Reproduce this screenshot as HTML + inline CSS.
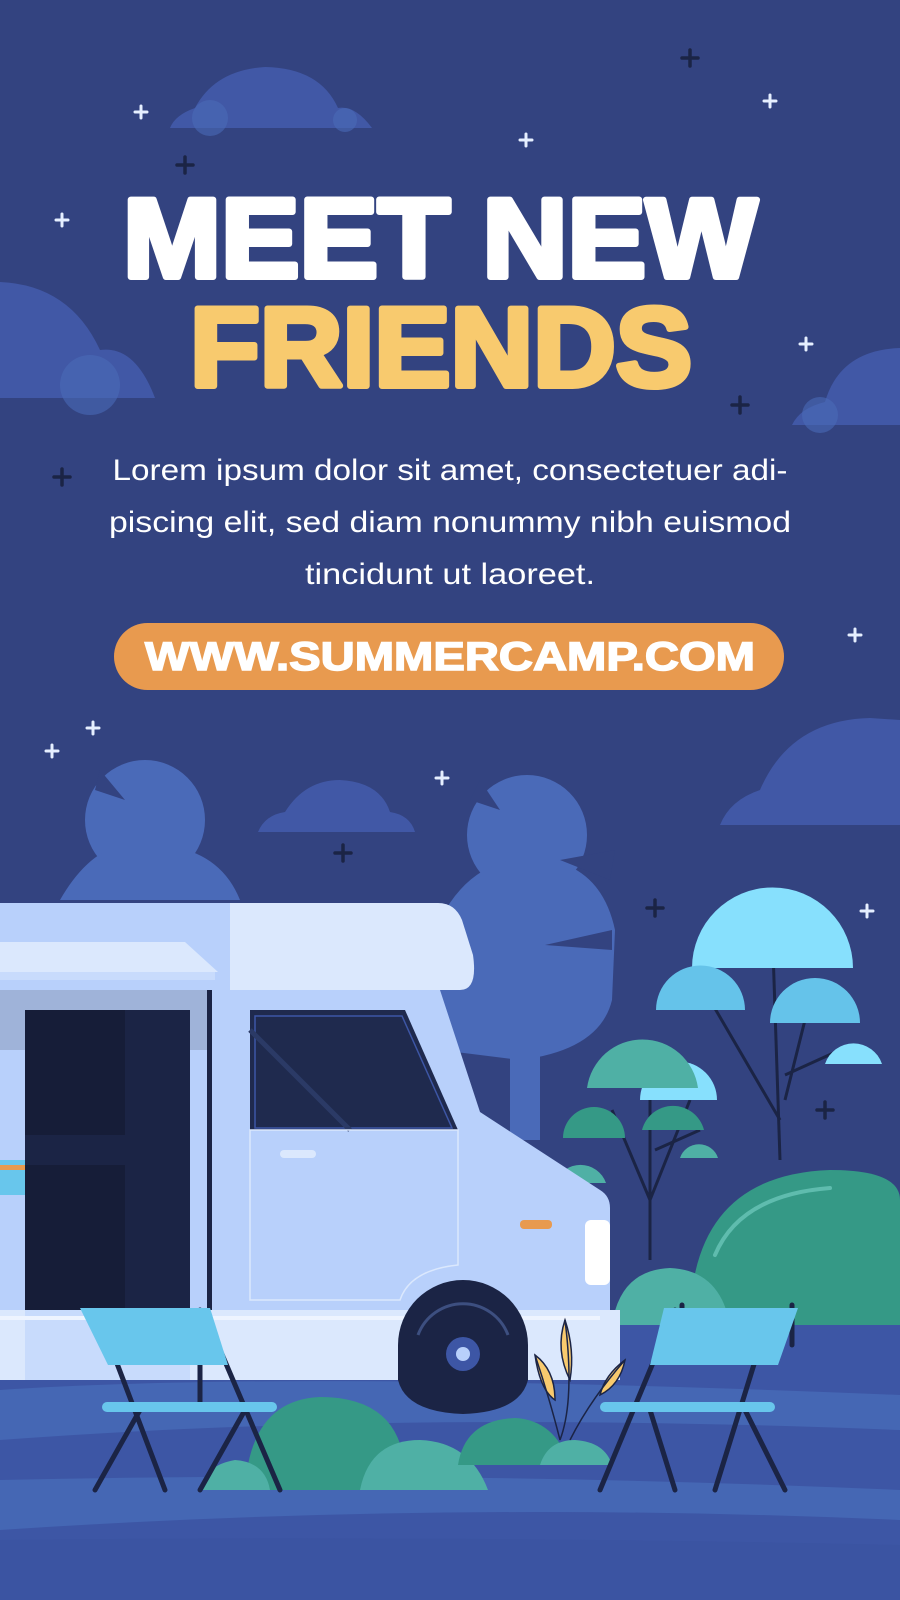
<!DOCTYPE html>
<html><head><meta charset="utf-8"><style>
html,body{margin:0;padding:0;background:#334380;}
svg{display:block}
</style></head><body>
<svg width="900" height="1600" viewBox="0 0 900 1600" xmlns="http://www.w3.org/2000/svg">
<defs>
<g id="sw"><path d="M-6 0H6M0 -6V6" stroke="#e6efff" stroke-width="3" stroke-linecap="round"/></g>
<g id="sd"><path d="M-8 0H8M0 -8V8" stroke="#1b2445" stroke-width="3.5" stroke-linecap="round"/></g>
</defs>
<rect width="900" height="1600" fill="#334380"/>
<!-- clouds -->
<g fill="#4158a6">
<path d="M170 128 Q175 115 195 108 Q215 70 265 67 Q320 68 338 108 Q355 105 372 128Z"/>
<path d="M0 282 Q70 285 100 350 Q135 345 155 398 H0Z"/>
<path d="M792 425 Q800 408 825 402 Q840 350 900 348 V425Z"/>
<path d="M720 825 Q730 800 760 790 Q790 720 870 718 L900 720 V825Z"/>
<path d="M258 832 Q265 815 285 812 Q305 780 340 780 Q380 782 390 812 Q410 815 415 832Z"/>
</g>
<g fill="#4a6ab8" opacity=".6"><circle cx="210" cy="118" r="18"/><circle cx="345" cy="120" r="12"/><circle cx="90" cy="385" r="30"/><circle cx="820" cy="415" r="18"/></g>
<!-- stars -->
<use href="#sw" x="141" y="112"/><use href="#sw" x="770" y="101"/><use href="#sw" x="526" y="140"/><use href="#sw" x="62" y="220"/><use href="#sw" x="806" y="344"/><use href="#sw" x="855" y="635"/><use href="#sw" x="93" y="728"/><use href="#sw" x="52" y="751"/><use href="#sw" x="442" y="778"/><use href="#sw" x="867" y="911"/>
<use href="#sd" x="690" y="58"/><use href="#sd" x="185" y="165"/><use href="#sd" x="740" y="405"/><use href="#sd" x="62" y="477"/><use href="#sd" x="343" y="853"/><use href="#sd" x="655" y="908"/><use href="#sd" x="825" y="1110"/>
<!-- title -->
<text x="440" y="277" text-anchor="middle" font-family="Liberation Sans, sans-serif" font-weight="700" font-size="112" fill="#fff" stroke="#fff" stroke-width="6" stroke-linejoin="round" textLength="634" lengthAdjust="spacingAndGlyphs">MEET NEW</text>
<text x="441" y="386" text-anchor="middle" font-family="Liberation Sans, sans-serif" font-weight="700" font-size="112" fill="#f8ca6e" stroke="#f8ca6e" stroke-width="6" stroke-linejoin="round" textLength="502" lengthAdjust="spacingAndGlyphs">FRIENDS</text>
<g font-family="Liberation Sans, sans-serif" font-size="30" fill="#fff" text-anchor="middle">
<text x="450" y="480" textLength="675" lengthAdjust="spacingAndGlyphs">Lorem ipsum dolor sit amet, consectetuer adi-</text>
<text x="450" y="532" textLength="682" lengthAdjust="spacingAndGlyphs">piscing elit, sed diam nonummy nibh euismod</text>
<text x="450" y="584" textLength="290" lengthAdjust="spacingAndGlyphs">tincidunt ut laoreet.</text>
</g>
<rect x="114" y="623" width="670" height="67" rx="33.5" fill="#e89a4f"/>
<text x="450" y="670" text-anchor="middle" font-family="Liberation Sans, sans-serif" font-weight="700" font-size="40" fill="#fff" stroke="#fff" stroke-width="1.5" textLength="610" lengthAdjust="spacingAndGlyphs">WWW.SUMMERCAMP.COM</text>
<!-- background trees -->
<g fill="#4a6ab8">
<circle cx="145" cy="820" r="60"/><path d="M60 900 Q100 830 160 845 Q220 850 240 900Z"/>
<circle cx="527" cy="835" r="60"/><path d="M440 920 Q470 860 530 858 Q600 860 615 930 L612 1000 Q600 1050 520 1060 L440 1050Z"/>
<rect x="510" y="1040" width="30" height="100"/>
</g>
<g fill="#334380"><path d="M95 790 L125 800 L100 770Z"/><path d="M470 800 L500 810 L480 780Z"/><path d="M560 860 L615 850 L610 880Z"/><path d="M545 945 L612 930 L612 950Z"/></g>
<!-- ground -->
<rect x="0" y="1320" width="900" height="280" fill="#3d56a5"/>
<path d="M0 1390 Q300 1370 900 1395 V1430 Q400 1410 0 1440Z" fill="#4567b4"/>
<path d="M0 1480 Q450 1470 900 1490 V1520 Q450 1500 0 1530Z" fill="#4567b4"/>
<path d="M0 1540 Q450 1535 900 1545 V1600 H0Z" fill="#3b54a2"/>
<!-- right trees -->
<g stroke="#1b2445" stroke-width="3" fill="none">
<path d="M773 950 L780 1160"/><path d="M710 1000 L780 1120"/><path d="M810 1000 L785 1100"/><path d="M840 1050 L785 1075"/>
<path d="M650 1070 L650 1260"/><path d="M612 1110 L650 1200"/><path d="M690 1100 L650 1200"/><path d="M700 1130 L655 1150"/>
</g>
<g>
<path d="M692 968 A78 78 0 0 1 853 968Z" fill="#87e0fd"/>
<path d="M656 1010 A44 44 0 0 1 745 1010Z" fill="#65c3ea"/>
<path d="M770 1023 A44 44 0 0 1 860 1023Z" fill="#65c3ea"/>
<path d="M825 1064 A30 30 0 0 1 882 1064Z" fill="#87e0fd"/>
<path d="M640 1100 A38 38 0 0 1 717 1100Z" fill="#87e0fd"/>
<path d="M587 1088 A56 56 0 0 1 698 1088Z" fill="#4fb0a5"/>
<path d="M563 1138 A30 30 0 0 1 625 1138Z" fill="#359986"/>
<path d="M642 1130 A32 32 0 0 1 704 1130Z" fill="#359986"/>
<path d="M680 1158 A20 20 0 0 1 718 1158Z" fill="#4fb0a5"/>
<path d="M555 1183 A27 27 0 0 1 606 1183Z" fill="#4fb0a5"/>
</g>
<!-- right bushes -->
<path d="M690 1325 Q690 1175 830 1170 Q900 1170 900 1200 V1325Z" fill="#359986"/>
<path d="M612 1325 Q620 1270 670 1268 Q720 1270 730 1325Z" fill="#4fb0a5"/>
<path d="M715 1255 Q740 1195 830 1188" stroke="#5fbcae" stroke-width="4" fill="none" stroke-linecap="round"/>
<!-- van -->
<path d="M0 903 H438 Q455 903 462 920 L473 955 Q478 990 460 990 H0Z" fill="#dbe8fd"/>
<rect x="0" y="903" width="230" height="90" fill="#b8d0fb"/>
<path d="M0 942 H185 L218 972 H0Z" fill="#dbe8fd"/>
<path d="M0 972 H215 V980 H0Z" fill="#c8dbfc"/>
<path d="M0 990 H440 L480 1112 L600 1190 Q610 1196 610 1208 V1330 H0Z" fill="#b8d0fb"/>
<rect x="0" y="990" width="210" height="60" fill="#9fb3d9"/>
<rect x="25" y="1010" width="165" height="305" fill="#1b2445"/>
<rect x="25" y="1010" width="100" height="125" fill="#161d38"/>
<rect x="25" y="1165" width="100" height="150" fill="#161d38"/>
<rect x="207" y="990" width="5" height="390" fill="#1b2445"/>
<rect x="0" y="1160" width="25" height="35" fill="#68c6ec"/>
<rect x="0" y="1165" width="25" height="5" fill="#e89a4f"/>
<path d="M250 1010 H405 L458 1130 H250Z" fill="#1f2a4e"/>
<path d="M255 1016 H402 L452 1128 H255Z" fill="none" stroke="#3d56a5" stroke-width="1.5"/>
<path d="M250 1030 L350 1130" stroke="#2b3a66" stroke-width="5"/>
<path d="M250 1130 H458 V1265 Q410 1270 400 1300 H250Z" fill="none" stroke="#dbe8fd" stroke-width="1.5"/>
<rect x="280" y="1150" width="36" height="8" rx="4" fill="#dbe8fd"/>
<rect x="520" y="1220" width="32" height="9" rx="4" fill="#e89a4f"/>
<rect x="585" y="1220" width="25" height="65" rx="6" fill="#fff"/>
<rect x="0" y="1310" width="620" height="70" fill="#dbe8fd"/>
<rect x="25" y="1310" width="165" height="70" fill="#c8dbfc"/>
<rect x="0" y="1316" width="600" height="4" fill="#eef4ff"/>
<path d="M398 1380 V1345 A65 65 0 0 1 528 1345 V1380 Q520 1412 463 1414 Q406 1412 398 1380Z" fill="#1b2445"/>
<circle cx="463" cy="1354" r="17" fill="#3d56a5"/><circle cx="463" cy="1354" r="7" fill="#b8d0fb"/>
<path d="M418 1335 A48 48 0 0 1 508 1335" stroke="#3d4f80" stroke-width="3" fill="none"/>
<!-- grass -->
<g stroke="#1b2445" stroke-width="1.5" fill="#f8ca6e"><path d="M565 1320 Q555 1350 570 1380 Q575 1350 565 1320Z"/><path d="M535 1355 Q540 1390 555 1400 Q555 1370 535 1355Z"/><path d="M625 1360 Q605 1375 600 1395 Q620 1385 625 1360Z"/></g>
<path d="M560 1440 Q575 1400 565 1320 M570 1440 Q590 1400 625 1360 M560 1440 Q550 1400 535 1355" stroke="#1b2445" stroke-width="1.5" fill="none"/>
<!-- front bushes -->
<g>
<path d="M245 1490 Q250 1400 320 1397 Q400 1397 405 1470 L420 1490Z" fill="#359986"/>
<path d="M200 1490 Q205 1465 235 1460 Q265 1462 270 1490Z" fill="#4fb0a5"/>
<path d="M360 1490 Q370 1440 420 1440 Q470 1442 488 1490Z" fill="#4fb0a5"/>
<path d="M458 1465 Q465 1420 515 1418 Q555 1420 570 1465Z" fill="#359986"/>
<path d="M540 1465 Q548 1440 575 1440 Q605 1442 612 1465Z" fill="#4fb0a5"/>
</g>
<!-- chairs -->
<g>
<g stroke="#1b2445" stroke-width="5" stroke-linecap="round"><path d="M110 1345 L165 1490"/><path d="M218 1345 L280 1490"/><path d="M140 1410 L95 1490"/><path d="M245 1410 L200 1490"/><path d="M200 1310 V1405"/>
<path d="M675 1310 L600 1490"/><path d="M760 1345 L715 1490"/><path d="M650 1410 L675 1490"/><path d="M745 1410 L785 1490"/><path d="M792 1305 V1345"/><path d="M682 1305 V1345"/></g>
<path d="M80 1308 H210 L228 1365 H108Z" fill="#68c6ec"/>
<rect x="102" y="1402" width="175" height="10" rx="5" fill="#68c6ec"/>
<path d="M664 1308 H798 L778 1365 H650Z" fill="#68c6ec"/>
<rect x="600" y="1402" width="175" height="10" rx="5" fill="#68c6ec"/>
</g>
</svg>
</body></html>
